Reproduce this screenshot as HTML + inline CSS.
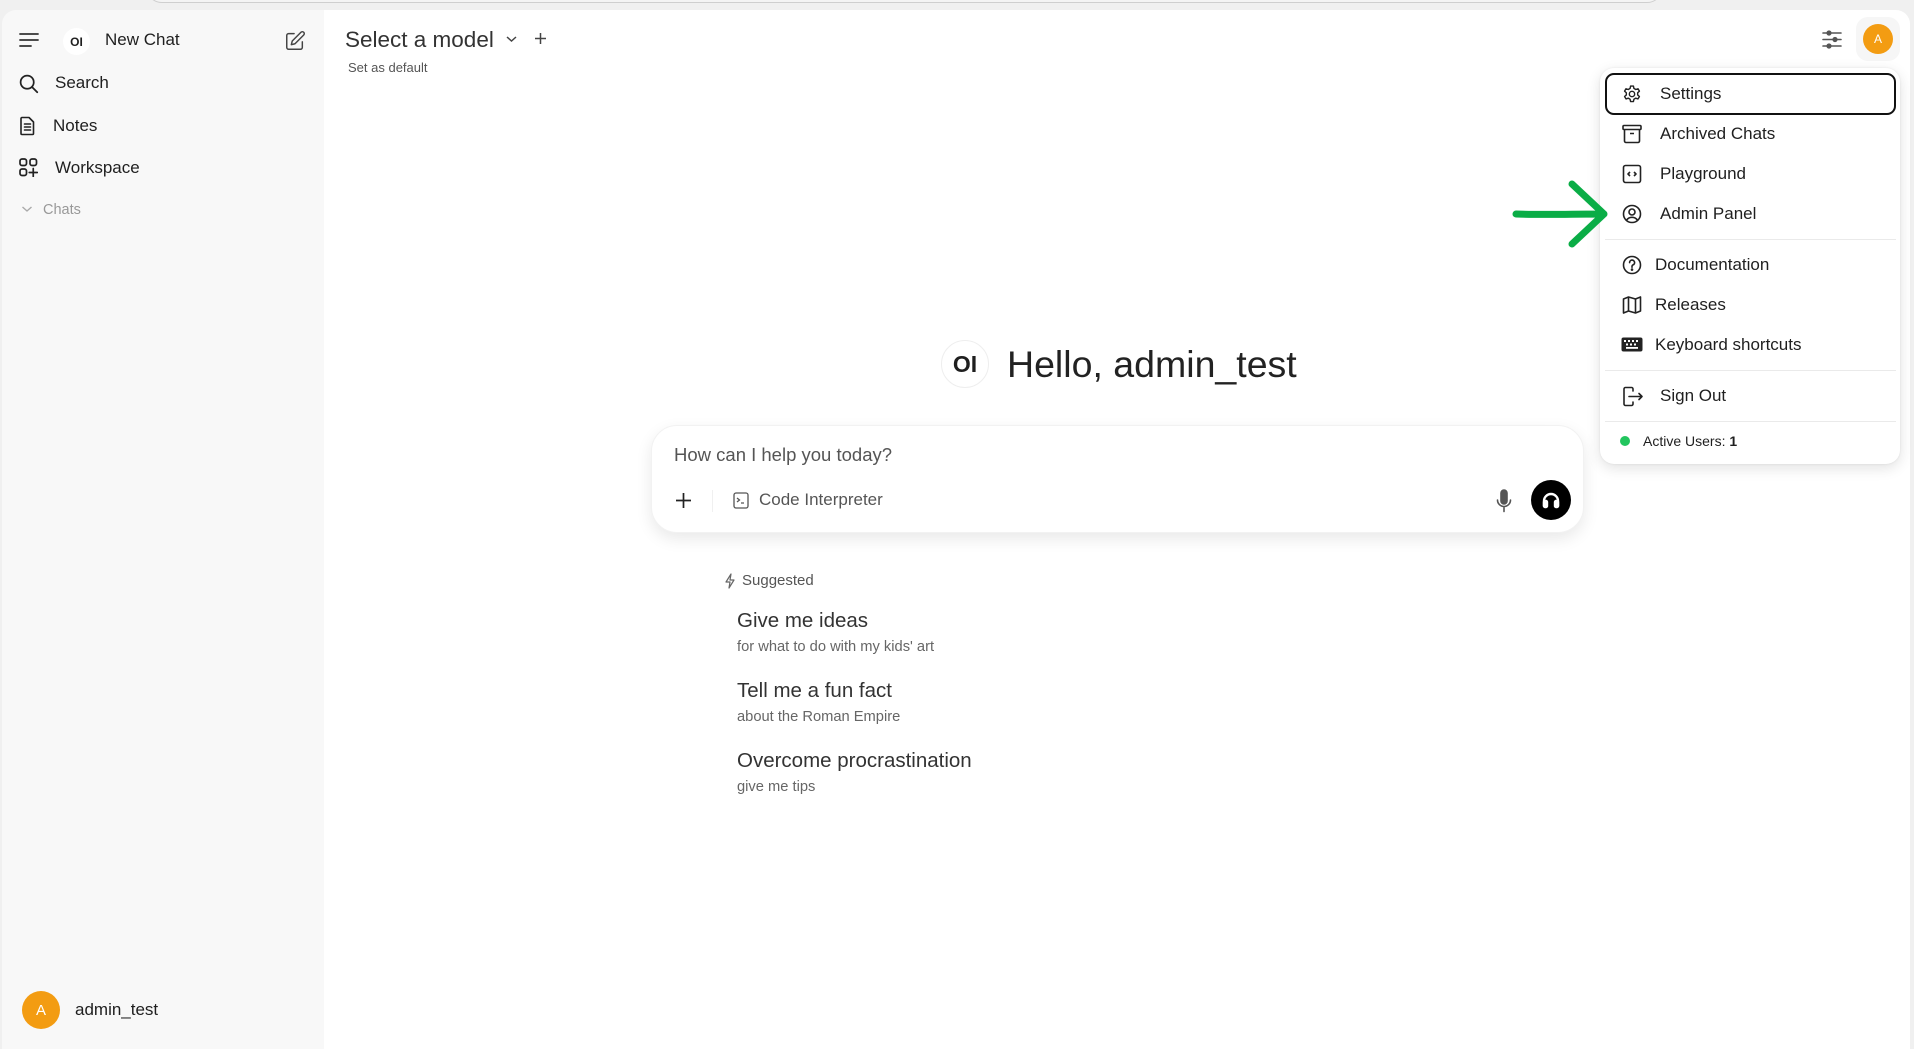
<!DOCTYPE html>
<html><head><meta charset="utf-8">
<style>
*{margin:0;padding:0;box-sizing:border-box}
body{width:1914px;height:1049px;background:#f0f0f0;font-family:"Liberation Sans",sans-serif;color:#1f1f1f;position:relative;overflow:hidden}
.a{position:absolute;white-space:nowrap}
.c{display:flex;align-items:center}
svg{display:block}
</style></head><body>
<div class="a" style="left:146px;top:-30px;width:1517px;height:33px;border:1px solid #cfcfcf;border-radius:16px;background:#f4f4f4"></div>
<div class="a" style="left:2px;top:10px;width:322px;height:1039px;background:#f8f8f8;border-top-left-radius:14px"></div>
<div class="a" style="left:324px;top:10px;width:1586px;height:1039px;background:#fff;border-top-right-radius:14px"></div>

<svg class="a" style="left:18px;top:31px" width="22" height="18" viewBox="0 0 22 18" fill="none" stroke="#333" stroke-width="1.8" stroke-linecap="round"><path d="M2 3h18M2 9h18M2 15h11"/></svg>
<div class="a c" style="left:63px;top:28px;width:27px;height:27px;border-radius:50%;background:#fff;justify-content:center;font-weight:bold;font-size:12px">OI</div>
<div class="a" style="left:105px;top:29px;font-size:17px;line-height:22px">New Chat</div>
<svg class="a" style="left:284px;top:30px" width="22" height="22" viewBox="0 0 24 24" fill="none" stroke="#444" stroke-width="1.6" stroke-linecap="round" stroke-linejoin="round"><path d="M11 4H5a2 2 0 0 0-2 2v13a2 2 0 0 0 2 2h13a2 2 0 0 0 2-2v-6"/><path d="M18.5 2.5a2.1 2.1 0 0 1 3 3L12 15l-4 1 1-4z"/></svg>

<svg class="a" style="left:18px;top:73px" width="21" height="21" viewBox="0 0 24 24" fill="none" stroke="#222" stroke-width="2" stroke-linecap="round"><circle cx="10.5" cy="10.5" r="7.5"/><path d="M16 16l6 6"/></svg>
<div class="a" style="left:55px;top:72px;font-size:17px;line-height:22px">Search</div>
<svg class="a" style="left:19px;top:116px" width="17" height="20" viewBox="0 0 17 20" fill="none" stroke="#222" stroke-width="1.6" stroke-linejoin="round"><path d="M3 1.5h7l4.5 4.5v11.5a1 1 0 0 1-1 1H3a1 1 0 0 1-1-1v-15a1 1 0 0 1 1-1z"/><path d="M5.5 8h6M5.5 11h6M5.5 14h6" stroke-linecap="round"/></svg>
<div class="a" style="left:53px;top:115px;font-size:17px;line-height:22px">Notes</div>
<svg class="a" style="left:19px;top:158px" width="19" height="19" viewBox="0 0 19 19" fill="none" stroke="#222" stroke-width="1.7"><rect x="1" y="1" width="6.5" height="6.5" rx="2"/><rect x="11" y="1" width="6.5" height="6.5" rx="2"/><rect x="1" y="11" width="6.5" height="6.5" rx="2"/><path d="M14.25 10.5v8M10.25 14.5h8" stroke-linecap="round"/></svg>
<div class="a" style="left:55px;top:157px;font-size:17px;line-height:22px">Workspace</div>
<svg class="a" style="left:21px;top:204px" width="12" height="10" viewBox="0 0 12 10" fill="none" stroke="#aaa" stroke-width="1.4"><path d="M1.5 3l4.5 4 4.5-4"/></svg>
<div class="a" style="left:43px;top:200px;font-size:14.5px;line-height:20px;color:#999">Chats</div>

<div class="a c" style="left:22px;top:991px;width:38px;height:38px;border-radius:50%;background:#f39c12;color:#fff;justify-content:center;font-size:15px">A</div>
<div class="a" style="left:75px;top:999px;font-size:17px;line-height:22px">admin_test</div>

<div class="a" style="left:345px;top:26px;font-size:22.5px;line-height:28px;color:#333">Select a model</div>
<svg class="a" style="left:505px;top:34px" width="13" height="10" viewBox="0 0 13 10" fill="none" stroke="#444" stroke-width="1.5"><path d="M2 3l4.5 4 4.5-4"/></svg>
<svg class="a" style="left:534px;top:32px" width="13" height="13" viewBox="0 0 13 13" fill="none" stroke="#444" stroke-width="1.5"><path d="M6.5 1v11M1 6.5h11"/></svg>
<div class="a" style="left:348px;top:60px;font-size:13px;line-height:16px;color:#555">Set as default</div>

<svg class="a" style="left:1821px;top:30px" width="22" height="19" viewBox="0 0 22 19" fill="none" stroke="#555" stroke-width="1.6" stroke-linecap="round"><path d="M2 3h18M2 9.5h18M2 16h18"/><circle cx="8" cy="3" r="1.8" fill="#555"/><circle cx="14" cy="9.5" r="1.8" fill="#555"/><circle cx="8" cy="16" r="1.8" fill="#555"/></svg>
<div class="a" style="left:1856px;top:17px;width:44px;height:44px;border-radius:12px;background:#f6f6f6"></div>
<div class="a c" style="left:1863px;top:24px;width:30px;height:30px;border-radius:50%;background:#f39c12;color:#fff;justify-content:center;font-size:12px">A</div>

<div class="a" style="left:1600px;top:68px;width:300px;height:396px;background:#fff;border-radius:14px;box-shadow:0 4px 14px rgba(0,0,0,.12),0 0 2px rgba(0,0,0,.08)"></div>
<div class="a" style="left:1605px;top:73px;width:291px;height:42px;border:2px solid #111;border-radius:9px"></div>
<svg class="a" style="left:1622px;top:84px" width="20" height="20" viewBox="0 0 24 24" fill="none" stroke="#222" stroke-width="1.7" stroke-linejoin="round"><path d="M10.3 2.5h3.4l.6 2.8 2.2 1.3 2.7-.9 1.7 2.9-2.1 1.9v2.6l2.1 1.9-1.7 2.9-2.7-.9-2.2 1.3-.6 2.8h-3.4l-.6-2.8-2.2-1.3-2.7.9-1.7-2.9 2.1-1.9v-2.6L3.1 8.6l1.7-2.9 2.7.9 2.2-1.3z"/><circle cx="12" cy="12" r="3.2"/></svg>
<div class="a" style="left:1660px;top:83px;font-size:17px;line-height:22px">Settings</div>
<svg class="a" style="left:1622px;top:124px" width="20" height="20" viewBox="0 0 20 20" fill="none" stroke="#222" stroke-width="1.6" stroke-linejoin="round"><rect x="1" y="1.5" width="18" height="4" rx="1"/><path d="M2.5 5.5v11.5a1.5 1.5 0 0 0 1.5 1.5h12a1.5 1.5 0 0 0 1.5-1.5V5.5M8 9.5h4"/></svg>
<div class="a" style="left:1660px;top:123px;font-size:17px;line-height:22px">Archived Chats</div>
<svg class="a" style="left:1622px;top:164px" width="20" height="20" viewBox="0 0 20 20" fill="none" stroke="#222" stroke-width="1.6" stroke-linejoin="round"><rect x="1.5" y="1.5" width="17" height="17" rx="2"/><path d="M8 8l-2 2 2 2M12 8l2 2-2 2"/></svg>
<div class="a" style="left:1660px;top:163px;font-size:17px;line-height:22px">Playground</div>
<svg class="a" style="left:1622px;top:204px" width="20" height="20" viewBox="0 0 20 20" fill="none" stroke="#222" stroke-width="1.6"><circle cx="10" cy="10" r="8.5"/><circle cx="10" cy="8" r="3"/><path d="M4.5 16.3c1.2-2 3.2-3 5.5-3s4.3 1 5.5 3"/></svg>
<div class="a" style="left:1660px;top:203px;font-size:17px;line-height:22px">Admin Panel</div>
<div class="a" style="left:1605px;top:239px;width:291px;height:1px;background:#eaeaea"></div>
<svg class="a" style="left:1622px;top:255px" width="20" height="20" viewBox="0 0 20 20" fill="none" stroke="#222" stroke-width="1.6" stroke-linecap="round"><circle cx="10" cy="10" r="8.5"/><path d="M7.6 7.6a2.5 2.5 0 1 1 3.4 2.3c-.6.3-1 .8-1 1.5v.8"/><circle cx="10" cy="14.6" r=".5" fill="#222"/></svg>
<div class="a" style="left:1655px;top:254px;font-size:17px;line-height:22px">Documentation</div>
<svg class="a" style="left:1622px;top:295px" width="20" height="20" viewBox="0 0 20 20" fill="none" stroke="#222" stroke-width="1.6" stroke-linejoin="round"><path d="M1.5 4l5-2 7 2 5-2v14l-5 2-7-2-5 2z"/><path d="M6.5 2v14M13.5 4v14"/></svg>
<div class="a" style="left:1655px;top:294px;font-size:17px;line-height:22px">Releases</div>
<svg class="a" style="left:1621px;top:337px" width="22" height="15" viewBox="0 0 22 15"><rect x="0.5" y="0.5" width="21" height="14" rx="2" fill="#222"/><g fill="#fff"><rect x="3" y="3" width="2" height="2"/><rect x="7" y="3" width="2" height="2"/><rect x="11" y="3" width="2" height="2"/><rect x="15" y="3" width="2" height="2"/><rect x="5" y="6.5" width="2" height="2"/><rect x="9" y="6.5" width="2" height="2"/><rect x="13" y="6.5" width="2" height="2"/><rect x="5" y="10" width="12" height="1.8"/></g></svg>
<div class="a" style="left:1655px;top:334px;font-size:17px;line-height:22px">Keyboard shortcuts</div>
<div class="a" style="left:1605px;top:370px;width:291px;height:1px;background:#eaeaea"></div>
<svg class="a" style="left:1622px;top:386px" width="22" height="21" viewBox="0 0 22 21" fill="none" stroke="#222" stroke-width="1.6" stroke-linecap="round" stroke-linejoin="round"><path d="M11 5V3a1.5 1.5 0 0 0-1.5-1.5h-6A1.5 1.5 0 0 0 2 3v15a1.5 1.5 0 0 0 1.5 1.5h6A1.5 1.5 0 0 0 11 18v-2M7 10.5h13M17 7.5l3 3-3 3"/></svg>
<div class="a" style="left:1660px;top:385px;font-size:17px;line-height:22px">Sign Out</div>
<div class="a" style="left:1605px;top:421px;width:291px;height:1px;background:#eaeaea"></div>
<div class="a" style="left:1620px;top:436px;width:10px;height:10px;border-radius:50%;background:#22c55e"></div>
<div class="a" style="left:1643px;top:432px;font-size:14px;line-height:18px">Active Users: <b>1</b></div>

<svg class="a" style="left:1510px;top:178px" width="100" height="72" viewBox="0 0 100 72" fill="none" stroke="#0aad46" stroke-width="7" stroke-linecap="round" stroke-linejoin="round"><path d="M6 36c30 1 55 0 88 0M62 6l32 30-32 30"/></svg>

<div class="a c" style="left:941px;top:340px;width:48px;height:48px;border-radius:50%;border:1px solid #eee;justify-content:center;font-weight:bold;font-size:23px">OI</div>
<div class="a" style="left:1007px;top:341px;font-size:37.5px;line-height:46px;color:#222">Hello, admin_test</div>

<div class="a" style="left:651px;top:425px;width:933px;height:108px;border-radius:26px;background:#fff;border:1px solid #f2f2f2;box-shadow:0 6px 16px rgba(0,0,0,.09)"></div>
<div class="a" style="left:674px;top:443px;font-size:18.5px;line-height:24px;color:#555">How can I help you today?</div>
<svg class="a" style="left:675px;top:492px" width="17" height="17" viewBox="0 0 17 17" fill="none" stroke="#222" stroke-width="1.7"><path d="M8.5 1v15M1 8.5h15"/></svg>
<div class="a" style="left:712px;top:490px;width:1px;height:22px;background:#f0f0f0"></div>
<svg class="a" style="left:733px;top:492px" width="16" height="17" viewBox="0 0 16 17" fill="none" stroke="#555" stroke-width="1.3"><rect x="1" y="1" width="14" height="15" rx="2"/><path d="M4 6l2.5 2L4 10M8 11h3"/></svg>
<div class="a" style="left:759px;top:489px;font-size:17px;line-height:22px;color:#555">Code Interpreter</div>
<svg class="a" style="left:1495px;top:489px" width="18" height="24" viewBox="0 0 18 24" fill="none" stroke="#555" stroke-width="1.6" stroke-linecap="round"><rect x="6" y="1" width="6" height="14" rx="3" fill="#555"/><path d="M2.5 11a6.5 6.5 0 0 0 13 0M9 17.5v5"/></svg>
<div class="a c" style="left:1531px;top:480px;width:40px;height:40px;border-radius:50%;background:#000;justify-content:center">
<svg width="22" height="22" viewBox="0 0 22 22" fill="none" stroke="#fff" stroke-width="2.4" stroke-linecap="round"><path d="M4 17v-5a7 7 0 0 1 14 0v5"/><rect x="4" y="12" width="3" height="6" rx="1" fill="#fff"/><rect x="15" y="12" width="3" height="6" rx="1" fill="#fff"/></svg></div>

<svg class="a" style="left:724px;top:573px" width="12" height="16" viewBox="0 0 12 16" fill="none" stroke="#666" stroke-width="1.2" stroke-linejoin="round"><path d="M7 1L2 9h4l-1 6 5-8H6z"/></svg>
<div class="a" style="left:742px;top:571px;font-size:15px;line-height:19px;color:#555">Suggested</div>
<div class="a" style="left:737px;top:609px;font-size:20.5px;line-height:24px;color:#333">Give me ideas</div>
<div class="a" style="left:737px;top:638px;font-size:14.7px;line-height:18px;color:#666">for what to do with my kids' art</div>
<div class="a" style="left:737px;top:679px;font-size:20.5px;line-height:24px;color:#333">Tell me a fun fact</div>
<div class="a" style="left:737px;top:708px;font-size:14.7px;line-height:18px;color:#666">about the Roman Empire</div>
<div class="a" style="left:737px;top:749px;font-size:20.5px;line-height:24px;color:#333">Overcome procrastination</div>
<div class="a" style="left:737px;top:778px;font-size:14.7px;line-height:18px;color:#666">give me tips</div>
</body></html>
